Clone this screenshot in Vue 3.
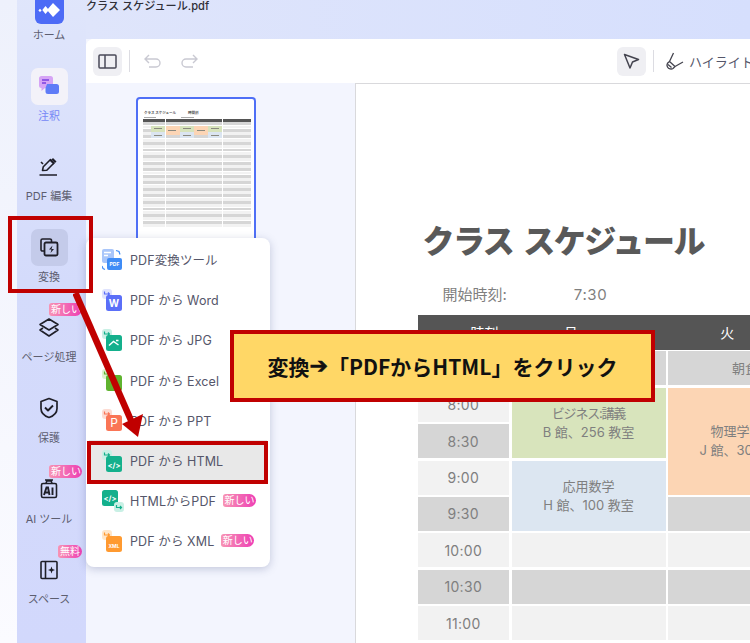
<script setup>
const navItems = [
  { id: 'home', label: 'ホーム' },
  { id: 'note', label: '注釈', active: true },
  { id: 'edit', label: 'PDF 編集' },
  { id: 'convert', label: '変換', selected: true },
  { id: 'pages', label: 'ページ処理', badge: '新しい' },
  { id: 'protect', label: '保護' },
  { id: 'ai', label: 'AI ツール', badge: '新しい' },
  { id: 'space', label: 'スペース', badge: '無料', short: true }
]

const menuItems = [
  { kind: 'tool', label: 'PDF変換ツール' },
  { kind: 'word', label: 'PDF から Word', color: '#5b6ff8', soft: '#dfe3fd', arrow: '#5b6ff8', mark: 'W' },
  { kind: 'jpg', label: 'PDF から JPG', color: '#14b08c', soft: '#c9f0e5', arrow: '#14b08c' },
  { kind: 'excel', label: 'PDF から Excel', color: '#5fb32f', soft: '#dcf2cc', arrow: '#5fb32f' },
  { kind: 'ppt', label: 'PDF から PPT', color: '#fa7556', soft: '#fddcd3', arrow: '#fa7556', mark: 'P', large: true },
  { kind: 'html', label: 'PDF から HTML', color: '#14b08c', soft: '#c9f0e5', arrow: '#14b08c', mark: '</>', small: true, current: true },
  { kind: 'reverse', label: 'HTMLからPDF', color: '#14b08c', soft: '#c9f0e5', arrow: '#14b08c', mark: '</>', badge: true },
  { kind: 'xml', label: 'PDF から XML', color: '#ff9a30', soft: '#ffe6c9', arrow: '#ff9a30', mark: 'XML', tiny: true, badge: true }
]

const times = ['8:00', '8:30', '9:00', '9:30', '10:00', '10:30', '11:00', '11:30']

const miniCells = []
for (let r = 1; r <= 33; r++) {
  for (let c = 1; c <= 8; c++) {
    miniCells.push({ r, c, tone: r === 1 ? 'mh' : r % 2 ? 'ml' : 'mg' })
  }
}
const miniBlocks = [
  { col: 2, row: 3, span: 2, tone: 'g' },
  { col: 3, row: 3, span: 3, tone: 'o' },
  { col: 4, row: 3, span: 2, tone: 'g' },
  { col: 5, row: 3, span: 3, tone: 'o' },
  { col: 6, row: 3, span: 2, tone: 'g' },
  { col: 2, row: 5, span: 2, tone: 'b' },
  { col: 4, row: 5, span: 2, tone: 'b' },
  { col: 6, row: 5, span: 2, tone: 'b' }
]
</script>

<template>
  <div class="screen">
    <div class="edge"></div>

    <nav class="sidebar">
      <div v-for="item in navItems" :key="item.id" class="nav-item" :class="{ active: item.active }">
        <div class="nav-icon" :class="{ tile: item.active, 'tile-sel': item.selected, home: item.id === 'home' }">
          <svg v-if="item.id === 'home'" width="29" height="29" viewBox="0 0 29 29" class="logo">
            <rect width="29" height="29" rx="6" fill="#4d6bf6" />
            <path d="M18 8l7 7-7 7-6-7z M10.500 11l3.400 4-3.400 4-3.200-4z M5 13.800l1.600 1.600L5 17 3.400 15.400z" fill="#fff" />
          </svg>
          <svg v-else-if="item.id === 'note'" width="22" height="22" viewBox="0 0 22 22">
            <path d="M1 3.500A2.500 2.500 0 0 1 3.500 1h9A2.500 2.500 0 0 1 15 3.500v7a2.500 2.500 0 0 1-2.500 2.500H7l-3.500 3v-3A2.500 2.500 0 0 1 1 10.500z" fill="#d6a4f5" />
            <path d="M9 9h9.500A2.500 2.500 0 0 1 21 11.500v5a2.500 2.500 0 0 1-2.500 2.500H10a2.500 2.500 0 0 1-2.500-2.500V13z" fill="#5f7cf7" />
            <path d="M4 5h7M4 8h4" stroke="#7b3fe0" stroke-width="1.600" fill="none" />
          </svg>
          <svg v-else-if="item.id === 'edit'" width="20" height="20" viewBox="0 0 20 20" fill="none" stroke="#1f1f28" stroke-width="1.600">
            <path d="M3.500 13.500l.8-3.800L11.500 2.500l3.500 3.500-7.200 7.200z" stroke-linejoin="round" />
            <path d="M11 3l4 4" />
            <path d="M13 1l3.500 3.500-1.500 1.500-3.500-3.500z" fill="#1f1f28" stroke="none" transform="translate(1 0)" />
            <path d="M2 5l2 2M.5 18h17.500" />
          </svg>
          <svg v-else-if="item.id === 'convert'" width="20" height="20" viewBox="0 0 20 20" fill="none" stroke="#1f1f28" stroke-width="1.600">
            <path d="M5.500 14H3.500A1.500 1.500 0 0 1 2 12.500V3.500A1.500 1.500 0 0 1 3.500 2H11a1.500 1.500 0 0 1 1.500 1.500V5" />
            <rect x="5.500" y="5.500" width="13" height="13" rx="1.500" stroke-width="1.800" />
            <path d="M13.500 8.500L10 12.500h2.500L11.500 16l3.500-4h-2.500z" fill="#1f1f28" stroke="none" />
          </svg>
          <svg v-else-if="item.id === 'pages'" width="22" height="22" viewBox="0 0 22 22" fill="none" stroke="#1f1f28" stroke-width="1.600" stroke-linejoin="round">
            <path d="M11 2l9 5.500-9 5.500-9-5.500z" />
            <path d="M5 11l-3 2 9 6 9-6-3-2" />
          </svg>
          <svg v-else-if="item.id === 'protect'" width="20" height="22" viewBox="0 0 20 22" fill="none" stroke="#1f1f28" stroke-width="1.700" stroke-linejoin="round">
            <path d="M10 1.500l8 3v7c0 4.500-3.500 7.500-8 9-4.500-1.500-8-4.500-8-9v-7z" />
            <path d="M6 10.500l3 3 5-5" stroke-width="1.900" />
          </svg>
          <svg v-else-if="item.id === 'ai'" width="20" height="20" viewBox="0 0 20 20" fill="none" stroke="#1f1f28" stroke-width="1.600">
            <rect x="2.500" y="4.500" width="15" height="14" rx="1.500" />
            <path d="M7 4.500l.8-2.500h4.400l.8 2.500M6 1h8" />
            <path d="M5 16l2.500-7.500h1.500L10.500 16M6 13.500h4M13.500 8.500V16" stroke-width="1.900" />
          </svg>
          <svg v-else width="20" height="20" viewBox="0 0 20 20" fill="none" stroke="#1f1f28" stroke-width="1.600">
            <rect x="2" y="1.500" width="16" height="17" rx="1" />
            <path d="M6.500 1.500v17" />
            <path d="M12.500 6.500l.9 2.600 2.600.9-2.600.9-.9 2.600-.9-2.600-2.600-.9 2.600-.9z" fill="#1f1f28" stroke="none" />
          </svg>
        </div>
        <span class="nav-label">{{ item.label }}</span>
        <span v-if="item.badge" class="new-badge nav-badge" :class="{ short: item.short }">{{ item.badge }}</span>
      </div>
    </nav>

    <main class="main">
      <header class="titlebar">クラス スケジュール.pdf</header>
      <section class="panel">
        <div class="toolbar">
          <button class="tool-btn">
            <svg width="19" height="15" viewBox="0 0 19 15" fill="none" stroke="#4a4a58" stroke-width="1.500">
              <rect x="1" y="1" width="17" height="13" rx="1" />
              <path d="M7 1v13" />
            </svg>
          </button>
          <span class="divider"></span>
          <svg class="history" width="18" height="14" viewBox="0 0 18 14" fill="none" stroke="#c9c9d2" stroke-width="1.400">
            <path d="M5 1L1 5l4 4M1 5h11a4 4 0 0 1 0 8H5" />
          </svg>
          <svg class="history redo" width="18" height="14" viewBox="0 0 18 14" fill="none" stroke="#c9c9d2" stroke-width="1.400">
            <path d="M13 1l4 4-4 4M17 5H6a4 4 0 0 0 0 8h7" />
          </svg>
          <button class="tool-btn pointer">
            <svg width="17" height="17" viewBox="0 0 17 17" fill="none" stroke="#44444f" stroke-width="1.500" stroke-linejoin="round">
              <path d="M1.500 1.500l14 5-6 2.500-2.500 6z" />
            </svg>
          </button>
          <span class="divider"></span>
          <svg class="marker" width="18" height="18" viewBox="0 0 18 18" fill="none" stroke="#44444f" stroke-width="1.300" stroke-linejoin="round">
            <path d="M7.500 1L3.500 9.500 9 14.500 17 10" />
            <path d="M3.500 9.500C1 11 .5 13 1.500 15s4 2.500 5.500 1.500L9 14.500" />
            <path d="M2 12.500l3.500 3" />
          </svg>
          <span class="tool-text">ハイライト</span>
        </div>

        <div class="workspace">
          <aside class="thumbs">
            <div class="thumb">
              <div class="mini-title"><b>クラス スケジュール</b><b>時間割</b></div>
              <div class="mini-meta"></div>
              <div class="mini-table">
                <i
                  v-for="cell in miniCells"
                  :key="cell.r + '-' + cell.c"
                  :class="cell.tone"
                  :style="{ gridColumn: cell.c, gridRow: cell.r }"
                ></i>
                <i
                  v-for="(b, n) in miniBlocks"
                  :key="n"
                  class="m-block"
                  :class="'m-' + b.tone"
                  :style="{ gridColumn: b.col, gridRow: b.row + ' / span ' + b.span }"
                ></i>
              </div>
            </div>
          </aside>

          <article class="page">
            <h1 class="doc-title">クラス スケジュール</h1>
            <div class="doc-meta"><span>開始時刻:</span><span class="start">7:30</span></div>
            <div class="schedule">
              <div class="head head-time">時刻</div>
              <div class="head head-day">月</div>
              <div class="head head-day">火</div>

              <div class="cell gray time"></div>
              <div class="cell gray"></div>
              <div class="cell gray">朝食</div>

              <div class="cell light time">{{ times[0] }}</div>
              <div class="cell green span2"><div><div class="tight">ビジネス:講義</div><div>B 館、256 教室</div></div></div>
              <div class="cell orange span3"><div><div>物理学:講義</div><div>J 館、300 教室</div></div></div>

              <div class="cell gray time">{{ times[1] }}</div>

              <div class="cell light time">{{ times[2] }}</div>
              <div class="cell blue span2"><div><div>応用数学</div><div>H 館、100 教室</div></div></div>

              <div class="cell gray time">{{ times[3] }}</div>
              <div class="cell gray"></div>

              <div class="cell light time">{{ times[4] }}</div>
              <div class="cell light"></div>
              <div class="cell light"></div>

              <div class="cell gray time">{{ times[5] }}</div>
              <div class="cell gray"></div>
              <div class="cell gray"></div>

              <div class="cell light time">{{ times[6] }}</div>
              <div class="cell light"></div>
              <div class="cell light"></div>

              <div class="cell gray time">{{ times[7] }}</div>
              <div class="cell gray"></div>
              <div class="cell gray"></div>
            </div>
          </article>
        </div>
      </section>
    </main>

    <div class="menu">
      <div v-for="m in menuItems" :key="m.kind" class="menu-item" :class="{ current: m.current }">
        <svg class="menu-icon" width="22" height="22" viewBox="0 0 22 22">
          <template v-if="m.kind === 'tool'">
            <rect x="0" y="0" width="12" height="14" rx="2" fill="#a9c6fa" />
            <path d="M2 3.500h7M2 6.500h4" stroke="#fff" stroke-width="1.300" />
            <rect x="5" y="9" width="15" height="12" rx="2" fill="#3f8cf6" />
            <text x="12.500" y="17" class="svg-mark tiny">PDF</text>
            <path d="M14 1.500l3 1 1 3" stroke="#3f8cf6" stroke-width="1.200" fill="none" />
            <path d="M0 17l1 2.500 2 1" stroke="#3f8cf6" stroke-width="1.200" fill="none" />
          </template>
          <template v-else-if="m.kind === 'reverse'">
            <rect x="0" y="0" width="16" height="16" rx="2.500" :fill="m.color" />
            <text x="8" y="11" class="svg-mark small">&lt;/&gt;</text>
            <rect x="12" y="12" width="10" height="10" rx="3" :fill="m.soft" />
            <path d="M14.500 15v2.500h5M18 16l1.500 1.500L18 19" :stroke="m.arrow" stroke-width="1.200" fill="none" />
          </template>
          <template v-else>
            <rect x="0" y="0" width="10" height="10" rx="3" :fill="m.soft" />
            <rect x="4" y="6" width="16" height="16" rx="2.500" :fill="m.color" />
            <path d="M2.500 2.500v2.500h5M6 3.500L7.500 5 6 6.500" :stroke="m.arrow" stroke-width="1.200" fill="none" />
            <text v-if="m.mark" x="12" y="18" class="svg-mark" :class="{ small: m.small, tiny: m.tiny, large: m.large }">{{ m.mark }}</text>
            <path v-if="m.kind === 'jpg'" d="M7 16.500l4.500-4 5 3.500M14 11.500h2.500" stroke="#fff" stroke-width="1.400" fill="none" />
          </template>
        </svg>
        <span class="menu-label">{{ m.label }}</span>
        <span v-if="m.badge" class="new-badge menu-badge">新しい</span>
      </div>
    </div>

    <div class="mark mark-convert"></div>
    <div class="mark mark-html"></div>

    <svg class="arrow" width="160" height="160" viewBox="0 0 160 160">
      <path d="M2.500 0L60 132" stroke="#c00000" stroke-width="6.500" fill="none" />
      <path d="M65 144L49 131 70 121z" fill="#c00000" />
    </svg>

    <div class="callout">変換<span class="callout-arrow">➔</span>「PDFからHTML」をクリック</div>
  </div>
</template>

<style>
html, body { margin: 0; background: #fff; }
</style>

<style scoped>
.screen {
  position: relative;
  width: 750px;
  height: 643px;
  overflow: hidden;
  display: flex;
  font-family: Inter, "Noto Sans CJK JP", sans-serif;
  background: #f3f5fe;
}
.edge { width: 17px; flex: none; background: linear-gradient(#eef1fc, #fbfbff); }
.sidebar {
  width: 69px;
  flex: none;
  box-sizing: border-box;
  padding-right: 5px;
  margin-top: -13px;
  height: 656px;
  background: linear-gradient(#e0e6fb, #d4dbfb 45%, #d2d8fc);
}
.nav-item {
  position: relative;
  height: 80.600px;
  display: flex;
  flex-direction: column;
  align-items: center;
}
.nav-icon {
  width: 37px;
  height: 37px;
  display: flex;
  align-items: center;
  justify-content: center;
  border-radius: 7px;
}
.nav-icon.home { align-items: flex-end; }
.nav-icon.tile { background: #f3f2f9; }
.nav-icon.tile-sel { background: #c4cbea; }
.logo { display: block; }
.nav-label {
  margin-top: 4px;
  font-size: 11px;
  line-height: 15px;
  color: #5d5e70;
  white-space: nowrap;
}
.nav-item.active .nav-label { color: #7688f6; }
.new-badge {
  display: inline-block;
  height: 13px;
  line-height: 13px;
  width: 33px;
  box-sizing: border-box;
  padding: 0 2px;
  font-size: 10px;
  color: #fff;
  border-radius: 3px 7px 7px 3px;
  background: linear-gradient(90deg, #f794b4, #ee3fb4);
  white-space: nowrap;
}
.nav-badge { position: absolute; left: 32px; top: -6px; }
.nav-badge.short { left: 41px; width: 24px; }
.menu-badge { margin-left: 6.500px; }
.main { flex: 1; min-width: 0; display: flex; flex-direction: column; }
.titlebar {
  height: 39px;
  flex: none;
  box-sizing: border-box;
  font-size: 11.100px;
  line-height: 12px;
  color: #303038;
  font-weight: 500;
  background: linear-gradient(90deg, #dfe5fb, #d6dffd);
}
.panel {
  flex: 1;
  min-height: 0;
  display: flex;
  flex-direction: column;
  background: #fff;
  border-top-left-radius: 8px;
}
.toolbar {
  height: 44px;
  flex: none;
  display: flex;
  align-items: center;
  padding-left: 7px;
  background: #fff;
  border-top-left-radius: 8px;
}
.toolbar > * { flex: none; }
.tool-btn {
  width: 29px;
  height: 29px;
  padding: 0;
  border: 0;
  border-radius: 6px;
  background: #efeff3;
  display: flex;
  align-items: center;
  justify-content: center;
}
.divider { width: 1px; height: 22px; background: #dcdce2; margin-left: 7px; }
.history { margin-left: 14px; }
.history.redo { margin-left: 18px; }
.pointer { margin-left: 419px; }
.marker { margin-left: 12px; }
.tool-text { margin-left: 5px; font-size: 13px; color: #55566a; white-space: nowrap; }
.workspace { flex: 1; min-height: 0; display: flex; background: #f3f5fe; }
.thumbs { width: 269px; flex: none; padding: 14px 0 0 50px; box-sizing: border-box; }
.thumb {
  width: 120px;
  height: 170px;
  box-sizing: border-box;
  border: 2px solid #4f6ff6;
  border-radius: 4px;
  background: #fff;
  padding: 12px 5px 0 5px;
}
.mini-title { display: flex; gap: 12px; font-size: 3.500px; line-height: 5px; color: #555; padding-left: 1px; }
.mini-meta { height: 1px; margin: 1px 1px; background: linear-gradient(90deg, #aaa 12%, transparent 12%, transparent 36%, #aaa 36%, #aaa 48%, transparent 48%); }
.mini-table {
  display: grid;
  grid-template-columns: 8px repeat(7, 14px);
  grid-auto-rows: 2.900px;
  gap: .4px .3px;
}
.mini-table i { display: block; min-height: 0; }
.mh { background: #555; }
.mg { background: #d6d6d6; }
.ml { background: #f2f2f2; }
.m-block { background-image: linear-gradient(#8a8a80, #8a8a80); background-size: 60% 1px; background-repeat: no-repeat; background-position: center; }
.m-g { background-color: #d7e3bc; }
.m-o { background-color: #fcd5b5; }
.m-b { background-color: #dbe5f1; }
.page {
  flex: 1;
  min-width: 0;
  background: #fff;
  border-top: 1px solid #d9d9dc;
  border-left: 1px solid #d9d9dc;
  box-sizing: border-box;
  padding: 135px 0 0 61.500px;
  overflow: hidden;
}
.doc-title {
  margin: 0 0 0 5px;
  font-size: 32px;
  line-height: 46px;
  font-weight: 900;
  color: #595959;
  white-space: nowrap;
  letter-spacing: -1.500px;
  word-spacing: 5px;
}
.doc-meta {
  margin: 18px 0 0 25px;
  height: 24px;
  display: flex;
  font-size: 15px;
  line-height: 24px;
  color: #7f7f7f;
  white-space: nowrap;
}
.start { margin-left: 67px; letter-spacing: .6px; }
.schedule {
  margin-top: 8px;
  display: grid;
  grid-template-columns: 91.500px 154px 154px;
  grid-auto-rows: 34px;
  gap: 2.400px 2.500px;
  color: #7f7f7f;
  font-size: 14px;
  line-height: 19px;
  white-space: nowrap;
}
.head {
  background: #555;
  color: #fff;
  margin-right: -2.500px;
  margin-bottom: -1px;
  display: flex;
  align-items: center;
  justify-content: center;
  font-size: 14px;
}
.head-time { padding-left: 40px; }
.head-day { padding-right: 38px; }
.cell {
  display: flex;
  align-items: center;
  justify-content: center;
  text-align: center;
  font-size: 13px;
}
.tight { letter-spacing: -1.200px; }
.time { font-size: 14px; letter-spacing: .3px; }
.gray { background: #d6d6d6; }
.light { background: #f2f2f2; }
.green { background: #d8e4bc; }
.orange { background: #fcd5b4; }
.blue { background: #dce6f1; }
.span2 { grid-row: span 2; }
.span3 { grid-row: span 3; }
.menu {
  position: absolute;
  left: 86px;
  top: 238px;
  width: 184px;
  height: 329px;
  box-sizing: border-box;
  padding: 1.500px 0;
  background: #fff;
  border-radius: 8px;
  box-shadow: 0 2px 8px rgba(70, 80, 130, .28);
}
.menu-item {
  height: 40.200px;
  display: flex;
  align-items: center;
  padding-left: 16px;
  box-sizing: border-box;
  position: relative;
}
.menu-item.current { background: #e8e8e8; margin: 0 3px; padding-left: 13px; }
.menu-icon { flex: none; }
.menu-label {
  margin-left: 6px;
  font-size: 12.500px;
  color: #55566a;
  white-space: nowrap;
  letter-spacing: .1px;
}
.svg-mark {
  fill: #fff;
  font-family: Inter, sans-serif;
  font-weight: 700;
  font-size: 10px;
  text-anchor: middle;
}
.svg-mark.small { font-size: 7.500px; }
.svg-mark.tiny { font-size: 5px; }
.svg-mark.large { font-size: 12px; font-weight: 400; }
.mark { position: absolute; box-sizing: border-box; border: 4px solid #c00000; }
.mark-convert { left: 8px; top: 216px; width: 85px; height: 77px; }
.mark-html { left: 87px; top: 441px; width: 181px; height: 43px; }
.arrow { position: absolute; left: 73px; top: 293px; }
.callout {
  position: absolute;
  left: 230px;
  top: 330px;
  width: 425px;
  height: 72px;
  box-sizing: border-box;
  border: 4px solid #c00000;
  background: #ffd766;
  display: flex;
  align-items: center;
  justify-content: center;
  font-family: "Noto Sans CJK JP", sans-serif;
  font-size: 21px;
  font-weight: 700;
  color: #111;
  white-space: nowrap;
}
.callout-arrow {
  font-family: "DejaVu Sans", sans-serif;
  font-size: 22px;
  line-height: 1;
  -webkit-text-stroke: .6px #111;
}
</style>
